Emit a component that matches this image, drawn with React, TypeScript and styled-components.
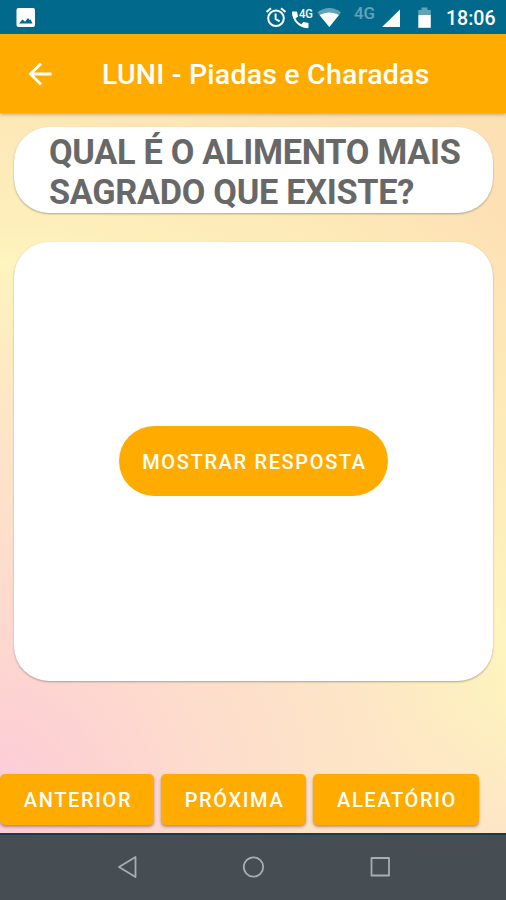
import React from "react";
import styled, { createGlobalStyle } from "styled-components";

const Global = createGlobalStyle`
  * { box-sizing: border-box; }
  html, body { margin: 0; padding: 0; }
  body { font-family: Roboto, "Liberation Sans", sans-serif; overflow: hidden; }
`;

const Screen = styled.div`
  width: 506px;
  height: 900px;
  display: flex;
  flex-direction: column;
  background: #464d53;
`;

const StatusBar = styled.div`
  height: 34px;
  flex: none;
  display: flex;
  align-items: center;
  background: #00698c;
  color: #fff;
`;

const StatusIcons = styled.svg`
  display: block;
  flex: none;
`;

const Clock = styled.span`
  margin-left: 10px;
  padding-top: 3px;
  font-size: 19.5px;
  font-weight: 500;
  line-height: 24px;
`;

const AppBar = styled.header`
  height: 79px;
  flex: none;
  display: flex;
  align-items: center;
  background: #ffab00;
  box-shadow: 0 1px 4px rgba(80, 60, 20, 0.45);
  z-index: 1;
  padding: 0 0 0 25px;
`;

const Title = styled.h1`
  margin: 3px 0 0 49px;
  font-size: 28.5px;
  font-weight: 500;
  line-height: 34px;
  letter-spacing: 0.2px;
  color: #fff;
  white-space: nowrap;
`;

const Content = styled.main`
  height: 720px;
  flex: none;
  display: flex;
  flex-direction: column;
  padding: 14px 13px 0 14px;
  background:
    radial-gradient(ellipse 260px 130px at 506px 720px, rgba(253, 228, 198, 0.9), rgba(253, 230, 198, 0)),
    radial-gradient(
      circle at -20px 700px,
      #fccada 0px,
      #fdd1d3 100px,
      #fddccc 230px,
      #fde6c6 400px,
      #fdf4be 550px,
      #fdefbb 590px,
      #fde8b8 690px,
      #fde0b4 800px
    );
`;

const Card = styled.section`
  flex: none;
  background: #fff;
  border-radius: 35px;
  box-shadow: 0 1px 2px rgba(70, 60, 45, 0.4);
`;

const Question = styled(Card)`
  height: 86px;
  padding: 6px 0 0 35px;
  color: #686868;
  font-size: 34.3px;
  font-weight: 700;
  line-height: 39.5px;
  letter-spacing: -0.3px;
  white-space: nowrap;
`;

const Answer = styled(Card)`
  height: 439px;
  margin-top: 29px;
  padding-bottom: 1px;
  display: flex;
  align-items: center;
  justify-content: center;
`;

const Button = styled.button<{ $w: number }>`
  flex: none;
  width: ${(p) => p.$w}px;
  padding: 0 0 0 2px;
  border: 0;
  background: #ffab00;
  color: #fff;
  font-family: inherit;
  font-weight: 500;
  font-size: 20px;
  letter-spacing: 1.65px;
  white-space: nowrap;
`;

const Reveal = styled(Button)`
  height: 70px;
  padding-top: 1px;
  border-radius: 35px;
`;

const Actions = styled.div`
  display: flex;
  gap: 7px;
  margin: 93px 0 0 -14px;
`;

const Action = styled(Button)`
  height: 51px;
  border-radius: 5px;
  box-shadow: 0 2px 3px rgba(80, 50, 50, 0.45);
`;

const NavBar = styled.nav`
  height: 67px;
  flex: none;
  border-top: 2px solid #183b4d;
  background: #464d53;
`;

export default function App() {
  return (
    <>
      <Global />
      <Screen>
        <StatusBar>
          <StatusIcons width="436" height="34" viewBox="0 0 436 34" fill="#fff">
            <rect x="16.5" y="8" width="18.5" height="19" rx="2" />
            <path d="M19 23.5l3.500-4 2.500 2.200 3-3.700 1.500 2 1-.5 2 4z" fill="#00698c" />
            <g fill="none" stroke="#fff" strokeWidth="2">
              <circle cx="276" cy="18.3" r="7.8" />
              <path d="M266.5 12l4.5-3.8M285.5 12L281 8.2M275.6 13.5v5.5l4 2.4" />
            </g>
            <path d="M293 11.5h4l1 5-2.5 2c1.4 2.8 3.4 4.5 5.8 5.8l2.2-2.3 5 1v4c0 .8-.5 1.2-1.2 1.2C299 28 292 20.500 292 12.500c0-.7.4-1 1-1z" />
            <text x="299" y="18" fontSize="13" fontWeight="500" textLength="14" lengthAdjust="spacingAndGlyphs">4G</text>
            <path d="M317.500 12.500C324 6.500 334.500 6.500 341 12.500L329.300 27z" opacity=".38" />
            <path d="M319.500 15C325.500 11.500 333 11.500 339 15L329.300 27z" />
            <text x="354" y="18.500" fontSize="16.500" fontWeight="500" opacity=".38" textLength="21" lengthAdjust="spacingAndGlyphs">4G</text>
            <path d="M400 9.500V27H382z" />
            <path d="M421.500 7.500h6V10h3.300v5h-12.500v-5h3.200z" opacity=".38" />
            <path d="M418.300 15h12.500v12.800h-12.500z" />
          </StatusIcons>
          <Clock>18:06</Clock>
        </StatusBar>
        <AppBar>
          <svg width="28" height="28" viewBox="0 0 28 28" fill="none" stroke="#fff" strokeWidth="2.800">
            <path d="M26.500 14H5.500M16 3.500L5.500 14 16 24.500" />
          </svg>
          <Title>LUNI - Piadas e Charadas</Title>
        </AppBar>
        <Content>
          <Question>
            QUAL É O ALIMENTO MAIS
            <br />
            SAGRADO QUE EXISTE?
          </Question>
          <Answer>
            <Reveal $w={269}>MOSTRAR RESPOSTA</Reveal>
          </Answer>
          <Actions>
            <Action $w={154}>ANTERIOR</Action>
            <Action $w={145}>PRÓXIMA</Action>
            <Action $w={166}>ALEATÓRIO</Action>
          </Actions>
        </Content>
        <NavBar>
          <svg width="506" height="65" viewBox="0 835 506 65" fill="none" stroke="#a9adb0" strokeWidth="1.800" strokeLinejoin="round">
            <path d="M135.500 857v20L119 867z" />
            <circle cx="253.500" cy="867" r="9.700" />
            <rect x="371.500" y="858" width="17.500" height="17.500" />
          </svg>
        </NavBar>
      </Screen>
    </>
  );
}
